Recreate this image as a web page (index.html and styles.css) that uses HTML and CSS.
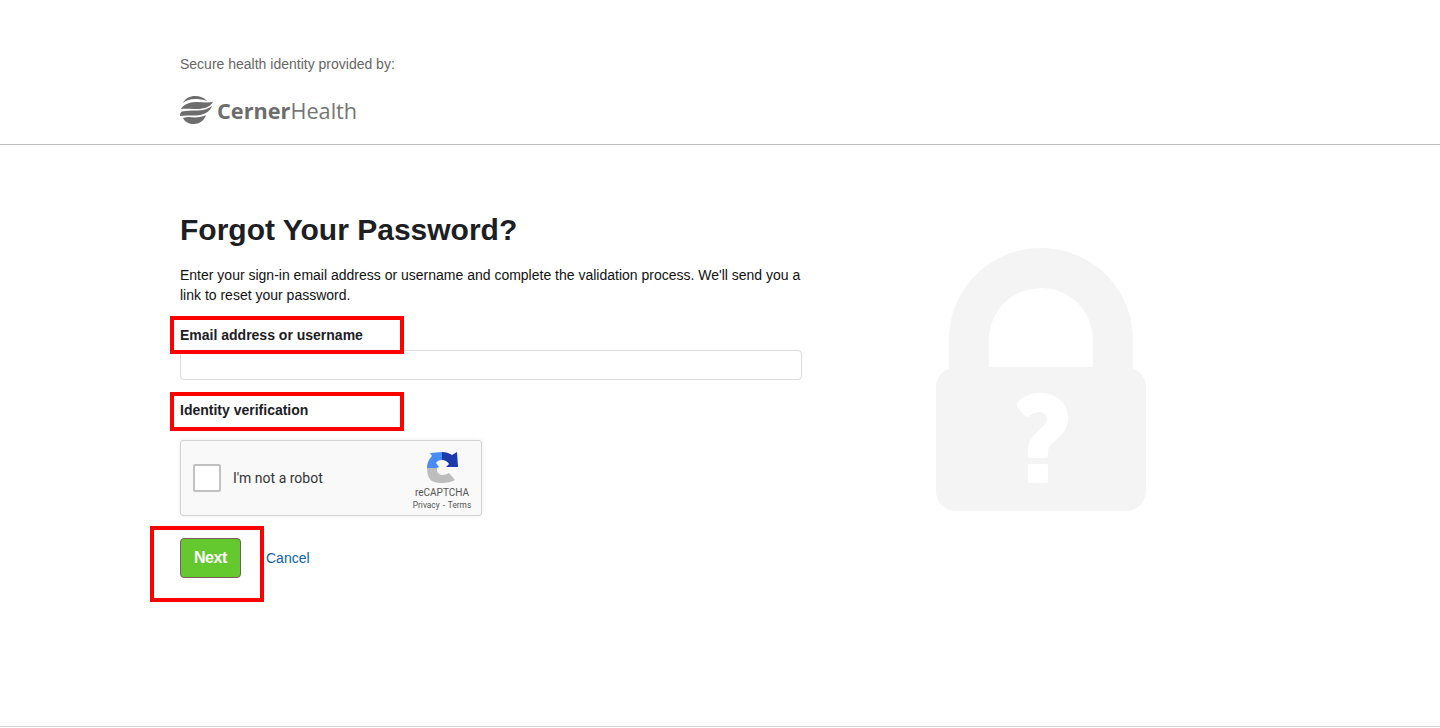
FILE: index.html
```html
<!DOCTYPE html>
<html lang="en">
<head>
<meta charset="utf-8">
<title>Forgot Your Password?</title>
<link rel="stylesheet" href="styles.css">
</head>
<body>
<header class="site-header">
  <p class="provided">Secure health identity provided by:</p>
  <div class="logo">
    <svg class="logo-mark" width="33" height="28" viewBox="0 0 33 28" aria-hidden="true">
      <path fill="#6d6d6d" d="M3 7C5 2.500 10 0 15 0C20 0 24 1.500 27 5C23 3.500 19 3 15 3C10 3 6 4.500 3 7Z"/>
      <path fill="#6d6d6d" d="M1 13C3 9 9 6 16 6C22 6 28 7 33 6C30 11 24 13 17 13C10 13 5 12.500 1 13Z"/>
      <path fill="#6d6d6d" d="M0 20C0 17 1 16 2 15.500C6 14.500 11 14.500 17 14.500C23 14.500 28 13 32 10C30 16 23 19.500 16 19.500C9 19.500 4 19 0 20Z"/>
      <path fill="#6d6d6d" d="M3 22C7 20.500 11 21 15 21.500C19 21.500 23 20.500 26 19C24 25 19 28 14 28C9 28 5 26 3 22Z"/>
    </svg>
    <span class="logo-text"><b>Cerner</b>Health</span>
  </div>
</header>
<main class="content">
  <section class="form-col">
    <h1>Forgot Your Password?</h1>
    <p class="intro">Enter your sign-in email address or username and complete the validation process. We'll send you a link to reset your password.</p>
    <label class="field-label" for="user">Email address or username</label>
    <input class="text-input" id="user" type="text">
    <div class="field-label verify-label">Identity verification</div>
    <div class="captcha">
      <span class="check"></span>
      <span class="robot">I'm not a robot</span>
      <div class="captcha-brand">
        <svg class="captcha-logo" width="31" height="31" viewBox="0 0 31 31" aria-hidden="true">
          <path fill="#bdbdbd" d="M0 16H10V19C11 21.500 13 23 15 23C18 23 20 22 22 21L28 28C25 30 20 31 15 31C11 31 8 30.500 5 29C2 27 0 23 0 16Z"/>
          <path fill="#4a8cf6" d="M0 16C0 12 1 8 5 4L3 1L15 0V8C12 8 10 9 9 11L12 15L10 16Z"/>
          <path fill="#1c3aa9" d="M15 0C19 0 22 1 25 3L30 0L31 15H19L22 12C21 10 18 8 15 8Z"/>
        </svg>
        <span class="captcha-name">reCAPTCHA</span>
        <span class="captcha-links">Privacy - Terms</span>
      </div>
    </div>
    <div class="actions">
      <button class="next" type="button">Next</button>
      <a class="cancel" href="#">Cancel</a>
    </div>
    <span class="mark mark-email"></span>
    <span class="mark mark-verify"></span>
    <span class="mark mark-next"></span>
  </section>
  <aside class="lock-col">
    <svg class="lock" width="210" height="263" viewBox="936 248 210 263" aria-hidden="true">
      <path fill="#f4f4f4" fill-rule="evenodd" d="M949 369V340C949 289 990 248 1041 248S1133 289 1133 340V369C1141 371 1146 379 1146 387V491C1146 502 1137 511 1126 511H956C945 511 936 502 936 491V387C936 379 941 371 949 369ZM989 367H1093V340C1093 311 1070 288 1041 288S989 311 989 340Z"/>
      <path fill="#fff" d="M1017 403C1023 396 1031 393 1040 393C1056 393 1068 403 1068 418C1068 429 1062 435 1055 441C1050 445 1048 448 1048 452V456C1048 457 1047 458 1046 458H1030C1029 458 1028 457 1028 456V450C1028 441 1033 436 1039 430C1044 426 1047 423 1047 419C1047 414 1043 412 1039 412C1035 412 1032 414 1029 416C1028 417 1026 417 1025 416L1018 408C1017 406 1016 405 1017 403Z"/>
      <rect fill="#fff" x="1028" y="464" width="20" height="19" rx="2"/>
    </svg>
  </aside>
</main>
<footer class="site-footer"></footer>
</body>
</html>
```
FILE: styles.css
```css
* { box-sizing: border-box; }
html, body { margin: 0; padding: 0; }
body {
  height: 728px;
  overflow: hidden;
  background: #fff;
  color: #1c2024;
  font-family: "Liberation Sans", Arial, sans-serif;
  font-size: 14px;
  display: flex;
  flex-direction: column;
}
.site-header {
  height: 145px;
  padding: 56px 0 0 180px;
  border-bottom: 1px solid #bdbdbd;
}
.provided { margin: 0; font-size: 14px; line-height: 16px; color: #666; }
.logo { display: flex; align-items: center; margin-top: 22px; height: 32px; }
.logo-mark { margin-right: 4px; }
.logo-text { font-family: "Open Sans", sans-serif; font-size: 21.7px; color: #757575; }
.logo-text b { font-weight: 700; color: #6d6d6d; }
.content { flex: 1; display: flex; padding: 0 0 0 180px; }
.form-col { position: relative; width: 622px; padding-top: 67px; }
h1 { margin: 0; font-size: 30px; line-height: 36px; font-weight: 700; color: #1c2024; }
.intro { margin: 17px 0 0; font-size: 14px; line-height: 20px; color: #111; }
.field-label { display: block; font-size: 14px; font-weight: 700; line-height: 20px; color: #1c2024; }
label.field-label { margin-top: 20px; }
.text-input {
  display: block;
  width: 622px;
  height: 30px;
  margin-top: 5px;
  border: 1px solid #dcdcdc;
  border-radius: 4px;
  background: #fff;
}
.verify-label { margin-top: 20px; }
.captcha {
  display: flex;
  align-items: center;
  width: 302px;
  height: 76px;
  margin-top: 20px;
  padding-left: 12px;
  background: #f9f9f9;
  border: 1px solid #d3d3d3;
  border-radius: 3px;
  box-shadow: 0 0 4px rgba(0,0,0,.08);
  font-family: Roboto, sans-serif;
}
.check { width: 28px; height: 28px; background: #fff; border: 2px solid #c1c1c1; border-radius: 2px; }
.robot { margin-left: 12px; font-size: 14px; color: #333; }
.captcha-brand { margin-left: auto; width: 70px; margin-right: 4px; display: flex; flex-direction: column; align-items: center; padding-top: 6px; color: #555; }
.captcha-logo { display: block; margin-bottom: 3px; }
.captcha-name { font-size: 10px; line-height: 14px; }
.captcha-links { font-size: 8.3px; line-height: 10px; word-spacing: 1px; }
.actions { display: flex; align-items: center; margin-top: 22px; }
.next {
  width: 61px;
  height: 40px;
  padding: 0;
  background: #63c92f;
  border: 1px solid #7a5c5c;
  border-radius: 4px;
  color: #fff;
  font-family: "Liberation Sans", Arial, sans-serif;
  font-size: 16px;
  letter-spacing: -0.4px;
  font-weight: 700;
}
.cancel { margin-left: 25px; color: #0b62a4; text-decoration: none; font-size: 14px; }
.mark { position: absolute; border: 4px solid #f00; }
.mark-email { left: -10px; top: 171px; width: 234px; height: 38px; }
.mark-verify { left: -10px; top: 247px; width: 234px; height: 39px; }
.mark-next { left: -30px; top: 381px; width: 114px; height: 76px; }
.lock-col { flex: 1; position: relative; }
.lock { display: block; margin: 103px 0 0 134px; }
.site-footer { height: 2px; border-top: 1px solid #d0d0d0; }
```
